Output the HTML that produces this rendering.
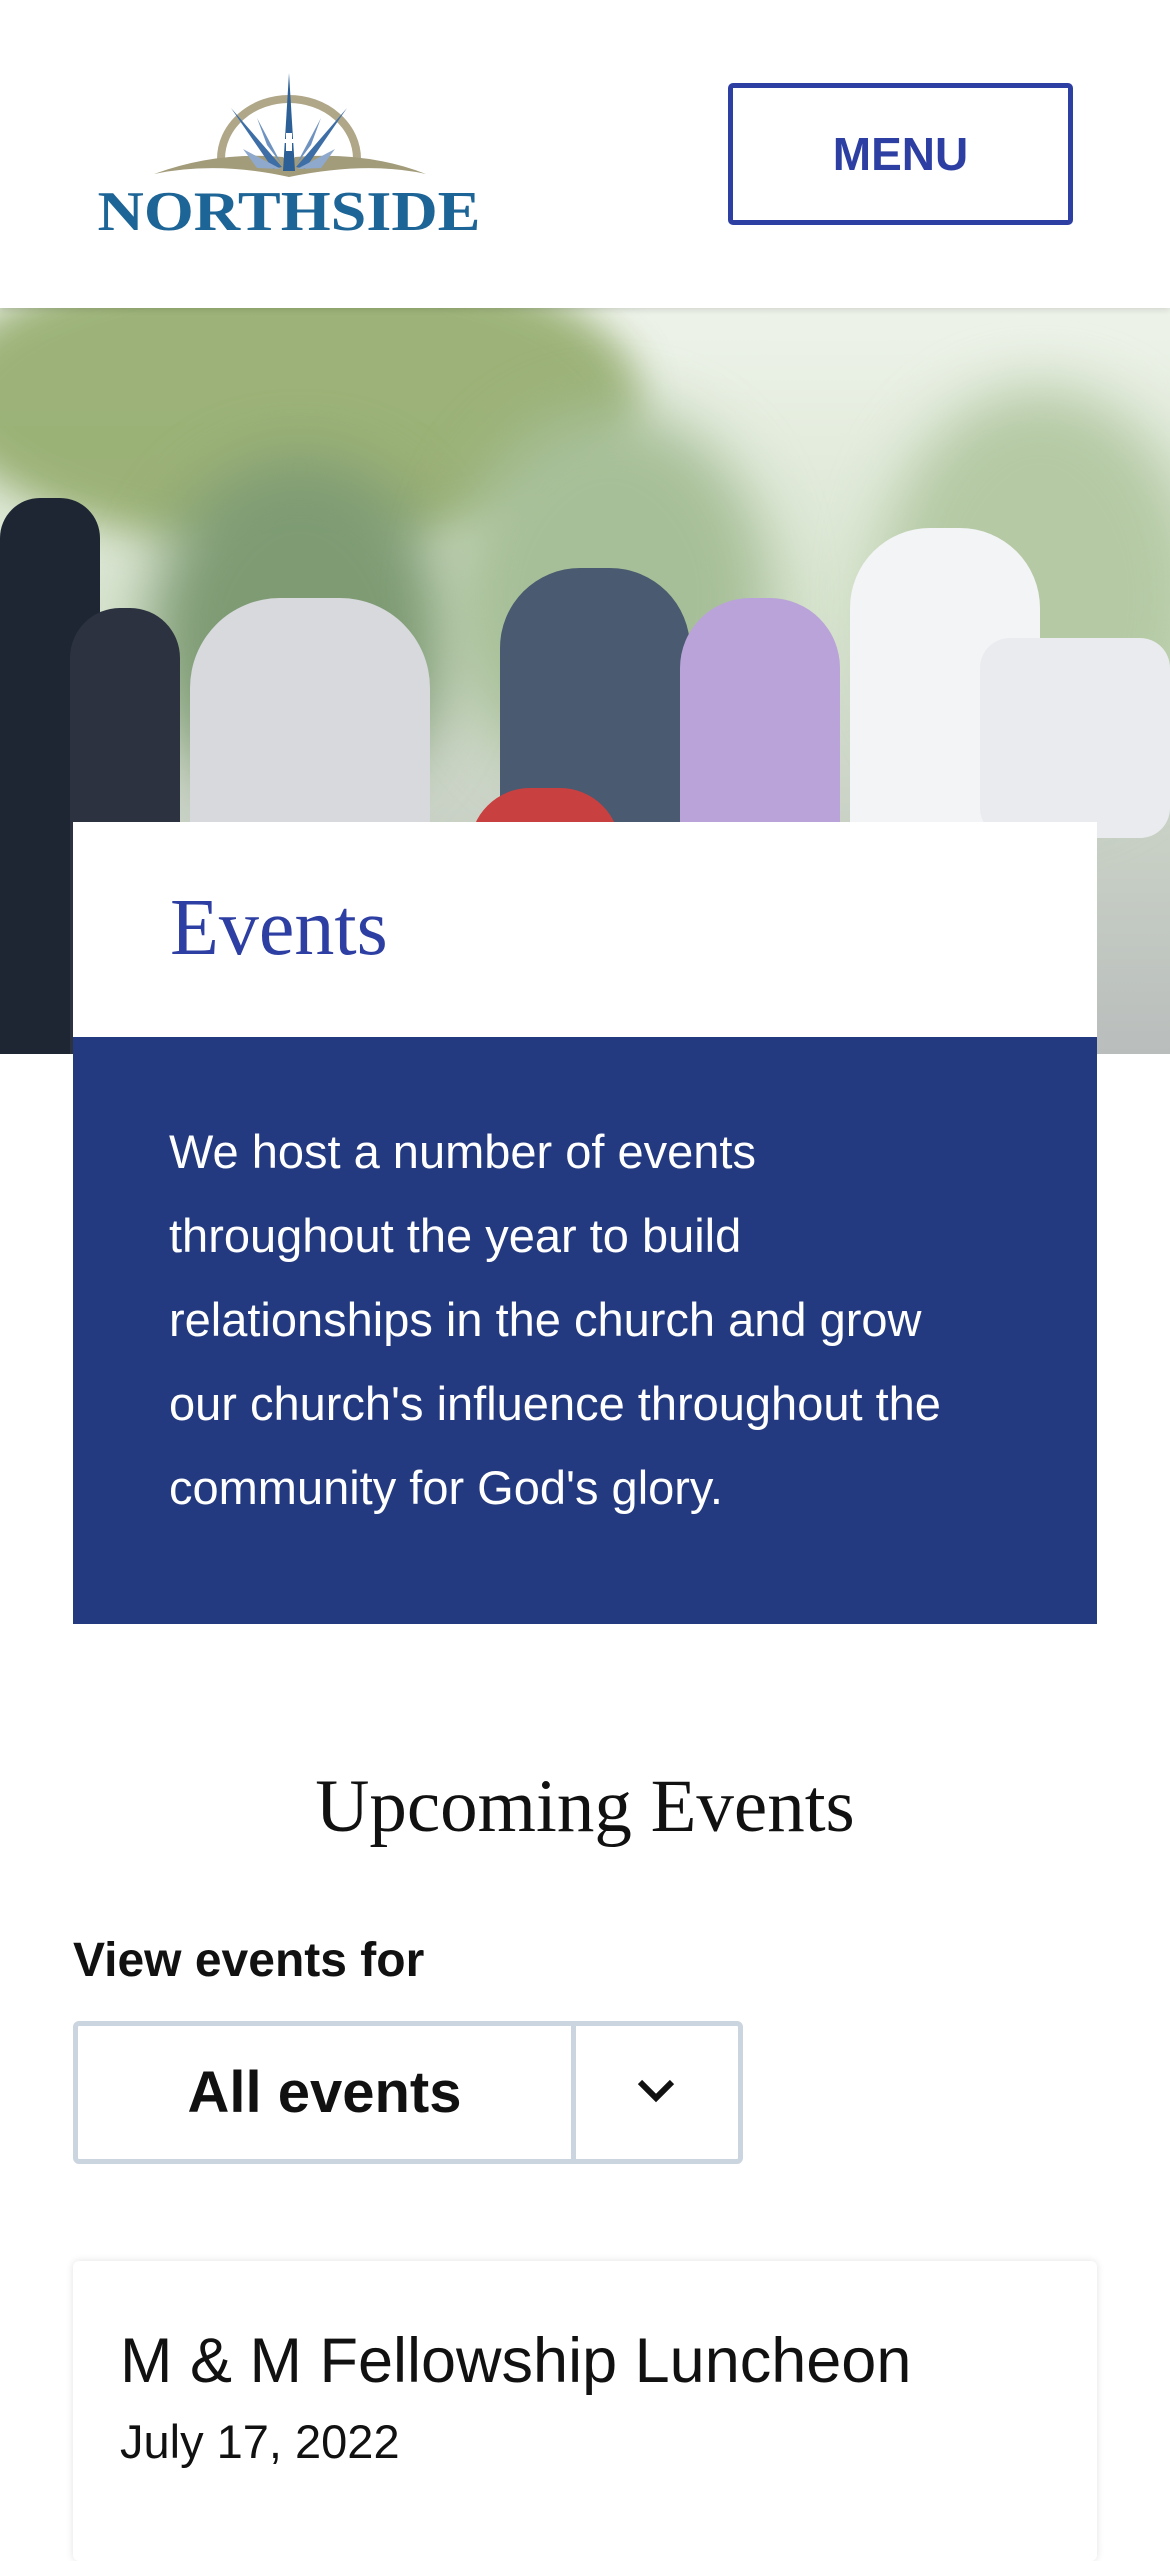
<!DOCTYPE html>
<html><head><meta charset="utf-8"><style>
*{margin:0;padding:0;box-sizing:border-box}
body{width:1170px;height:2532px;overflow:hidden;background:#fff;font-family:"Liberation Sans",sans-serif;position:relative}
.abs{position:absolute}
</style></head><body>
<div class="abs" style="left:0;top:0;width:1170px;height:308px;background:#fff;box-shadow:0 2px 6px rgba(0,0,0,.12);z-index:2"></div>
<svg class="abs" style="left:97px;top:73px;z-index:3" width="385" height="162" viewBox="0 0 385 162">
<path d="M124 86 A68 60 0 0 1 260 86" fill="none" stroke="#b0a789" stroke-width="8"/>
<path d="M57 101 Q120 78 186 84 L192 92 L198 84 Q270 78 329 101 Q270 88 192 104 Q120 88 57 101Z" fill="#a39c7a"/>
<polygon points="192,0 186,98 198,98" fill="#2b5f95"/>
<polygon points="134,35 185,94 176,96" fill="#3e6ea6"/>
<polygon points="250,35 199,94 208,96" fill="#3e6ea6"/>
<polygon points="160,45 185,92 170,72" fill="#6f93c0"/>
<polygon points="224,45 199,92 214,72" fill="#6f93c0"/>
<polygon points="146,76 184,96 160,95" fill="#8fa9cc"/>
<polygon points="238,76 200,96 224,95" fill="#8fa9cc"/>
<rect x="189" y="60" width="6" height="18" fill="#fff"/><rect x="184" y="66" width="16" height="4" fill="#fff"/>
<text x="192" y="157" text-anchor="middle" font-family="Liberation Serif,serif" font-weight="bold" font-size="56" fill="#1d6596" textLength="383" lengthAdjust="spacingAndGlyphs">NORTHSIDE</text>
</svg>
<div class="abs" style="left:728px;top:83px;width:345px;height:142px;border:5px solid #2e3fa3;border-radius:5px;z-index:3;color:#2e3fa3;font-weight:bold;font-size:46px;display:flex;align-items:center;justify-content:center">MENU</div>
<div class="abs" style="left:0;top:308px;width:1170px;height:746px;overflow:hidden;background:linear-gradient(180deg,#eef3ea 0%,#d8e4cf 40%,#c9d1c6 70%,#b9bdbc 100%)">
<div class="abs" style="left:-60px;top:-60px;width:700px;height:300px;border-radius:50%;background:#8fa866;filter:blur(20px);opacity:.85"></div>
<div class="abs" style="left:150px;top:150px;width:300px;height:350px;border-radius:50%;background:#7e9b74;filter:blur(30px)"></div>
<div class="abs" style="left:450px;top:100px;width:320px;height:380px;border-radius:50%;background:#a7bf98;filter:blur(30px)"></div>
<div class="abs" style="left:880px;top:80px;width:320px;height:420px;border-radius:50%;background:#b4c9a4;filter:blur(30px)"></div>
<div class="abs" style="left:0;top:190px;width:100px;height:560px;background:#1e2633;border-radius:40px 40px 0 0"></div>
<div class="abs" style="left:70px;top:300px;width:110px;height:450px;background:#2c3240;border-radius:50px 50px 0 0"></div>
<div class="abs" style="left:190px;top:290px;width:240px;height:460px;background:#d7d9dd;border-radius:90px 90px 0 0"></div>
<div class="abs" style="left:500px;top:260px;width:190px;height:490px;background:#4a5a70;border-radius:80px 80px 0 0"></div>
<div class="abs" style="left:680px;top:290px;width:160px;height:460px;background:#b9a3d8;border-radius:70px 70px 0 0"></div>
<div class="abs" style="left:850px;top:220px;width:190px;height:530px;background:#f3f4f6;border-radius:80px 80px 0 0"></div>
<div class="abs" style="left:980px;top:330px;width:190px;height:200px;background:#e9ebee;border-radius:30px"></div>
<div class="abs" style="left:470px;top:480px;width:150px;height:270px;background:#c94040;border-radius:60px 60px 0 0"></div>
</div>
<div class="abs" style="left:73px;top:822px;width:1024px;height:216px;background:#fff"></div>
<div class="abs" style="left:170px;top:878px;font-family:'Liberation Serif',serif;font-size:80px;color:#2e3fa3;line-height:100px">Events</div>
<div class="abs" style="left:73px;top:1037px;width:1024px;height:587px;background:#243a80"></div>
<div class="abs" style="left:169px;top:1110px;width:900px;color:#fff;font-size:47px;line-height:84px;white-space:nowrap">We host a number of events<br>throughout the year to build<br>relationships in the church and grow<br>our church's influence throughout the<br>community for God's glory.</div>
<div class="abs" style="left:0;top:1764px;width:1170px;text-align:center;font-family:'Liberation Serif',serif;font-size:75px;color:#111">Upcoming Events</div>
<div class="abs" style="left:73px;top:1933px;font-size:48px;font-weight:bold;color:#111">View events for</div>
<div class="abs" style="left:73px;top:2021px;width:670px;height:143px;border:5px solid #cbd5e0;border-radius:6px"></div>
<div class="abs" style="left:571px;top:2021px;width:5px;height:143px;background:#cbd5e0"></div>
<div class="abs" style="left:78px;top:2026px;width:493px;height:133px;display:flex;align-items:center;justify-content:center;font-size:58px;font-weight:bold;color:#111">All events</div>
<svg class="abs" style="left:636px;top:2076px" width="40" height="30" viewBox="0 0 40 30"><path d="M4 6 L20 22 L36 6" fill="none" stroke="#111" stroke-width="6"/></svg>
<div class="abs" style="left:73px;top:2261px;width:1024px;height:300px;background:#fff;border-radius:6px;box-shadow:0 0 8px rgba(0,0,0,.12)"></div>
<div class="abs" style="left:120px;top:2325px;font-size:63px;color:#111">M &amp; M Fellowship Luncheon</div>
<div class="abs" style="left:120px;top:2414px;font-size:47px;color:#111">July 17, 2022</div>
</body></html>
